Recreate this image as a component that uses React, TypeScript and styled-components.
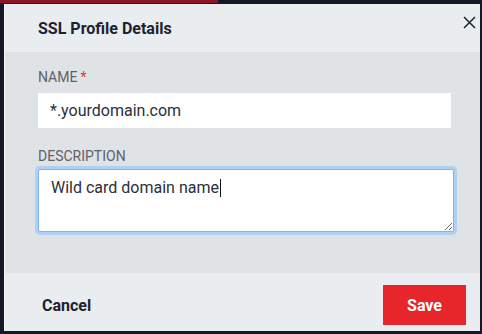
import styled, { createGlobalStyle } from 'styled-components';

const GlobalStyle = createGlobalStyle`
  html, body {
    margin: 0;
    padding: 0;
    background: #141827;
    font-family: Roboto, "Liberation Sans", Arial, sans-serif;
  }
  * { box-sizing: border-box; }
`

const Page = styled.div`
  width: 482px;
  height: 334px;
  display: flex;
  flex-direction: column;
  background: #141827;
  overflow: hidden;
`

const TopStrip = styled.div`
  height: 4px;
  display: flex;
`

const TopAccent = styled.div`
  width: 218px;
  height: 3px;
  background: #8c1526;
`

const Dialog = styled.div`
  margin: 0 2px 3px 5px;
  flex: 1;
  display: flex;
  flex-direction: column;
  background: #e9edf0;
  box-shadow: -1px 0 0 #f3f5f7;
`

const Header = styled.div`
  position: relative;
  height: 48px;
  display: flex;
  align-items: center;
  padding-left: 33px;
  background: #e9edf0;
`

const Title = styled.h2`
  margin: 0;
  font-size: 16px;
  font-weight: 700;
  color: #1d2130;
`

const CloseButton = styled.button`
  position: absolute;
  top: 11px;
  right: 4px;
  width: 14px;
  height: 14px;
  padding: 0;
  border: none;
  background: none;
  display: flex;
  align-items: center;
  justify-content: center;
  cursor: pointer;
`

const Body = styled.div`
  height: 221px;
  padding: 17px 29px 0 33px;
  background: #dfe3e6;
  display: flex;
  flex-direction: column;
`

const Label = styled.label<{ $top?: number }>`
  display: block;
  margin-top: ${p => p.$top ?? 0}px;
  font-size: 14px;
  line-height: 16px;
  color: #5f6166;
`

const Required = styled.span`
  color: #e8332f;
  margin-left: 3px;
`

const TextInput = styled.input`
  display: block;
  width: 100%;
  height: 35px;
  margin-top: 8px;
  padding: 0 12px;
  border: none;
  background: #ffffff;
  font-family: Roboto, "Liberation Sans", Arial, sans-serif;
  font-size: 16px;
  color: #2b2f3a;
  outline: none;
`

const AreaWrap = styled.div`
  position: relative;
  margin-top: 5px;
  margin-right: -3px;
`

const TextArea = styled.textarea`
  display: block;
  width: 100%;
  height: 63px;
  padding: 8px 12px;
  border: 1px solid #7fb4f2;
  border-radius: 2px;
  box-shadow: 0 0 0 3px #b0d0f3;
  background: #ffffff;
  font-family: Roboto, "Liberation Sans", Arial, sans-serif;
  font-size: 16px;
  line-height: 20px;
  color: #2b2f3a;
  outline: none;
`

const Caret = styled.span`
  position: absolute;
  left: 182px;
  top: 10px;
  width: 1px;
  height: 18px;
  background: #111;
`

const Footer = styled.div`
  flex: 1;
  display: flex;
  align-items: flex-start;
  justify-content: space-between;
  padding: 12px 14px 0 37px;
  background: #e9edf0;
`

const TextButton = styled.button`
  height: 40px;
  padding: 0;
  border: none;
  background: none;
  font-family: Roboto, "Liberation Sans", Arial, sans-serif;
  font-size: 16px;
  font-weight: 700;
  color: #1d2130;
  cursor: pointer;
`

const PrimaryButton = styled.button`
  width: 83px;
  height: 40px;
  border: none;
  background: #e6262a;
  font-family: Roboto, "Liberation Sans", Arial, sans-serif;
  font-size: 16px;
  font-weight: 700;
  color: #ffffff;
  cursor: pointer;
`

const App = () => {
  return (
    <Page>
      <GlobalStyle />
      <TopStrip>
        <TopAccent />
      </TopStrip>
      <Dialog>
        <Header>
          <Title>SSL Profile Details</Title>
          <CloseButton aria-label="Close">
            <svg width="13" height="13" viewBox="0 0 13 13">
              <path d="M1 1 L12 12 M12 1 L1 12" stroke="#1d2130" strokeWidth="1.5" />
            </svg>
          </CloseButton>
        </Header>

        <Body>
          <Label>NAME<Required>*</Required></Label>
          <TextInput defaultValue="*.yourdomain.com" />

          <Label $top={20}>DESCRIPTION</Label>
          <AreaWrap>
            <TextArea defaultValue="Wild card domain name" />
            <Caret />
          </AreaWrap>
        </Body>

        <Footer>
          <TextButton>Cancel</TextButton>
          <PrimaryButton>Save</PrimaryButton>
        </Footer>
      </Dialog>
    </Page>
  )
}

export default App;
